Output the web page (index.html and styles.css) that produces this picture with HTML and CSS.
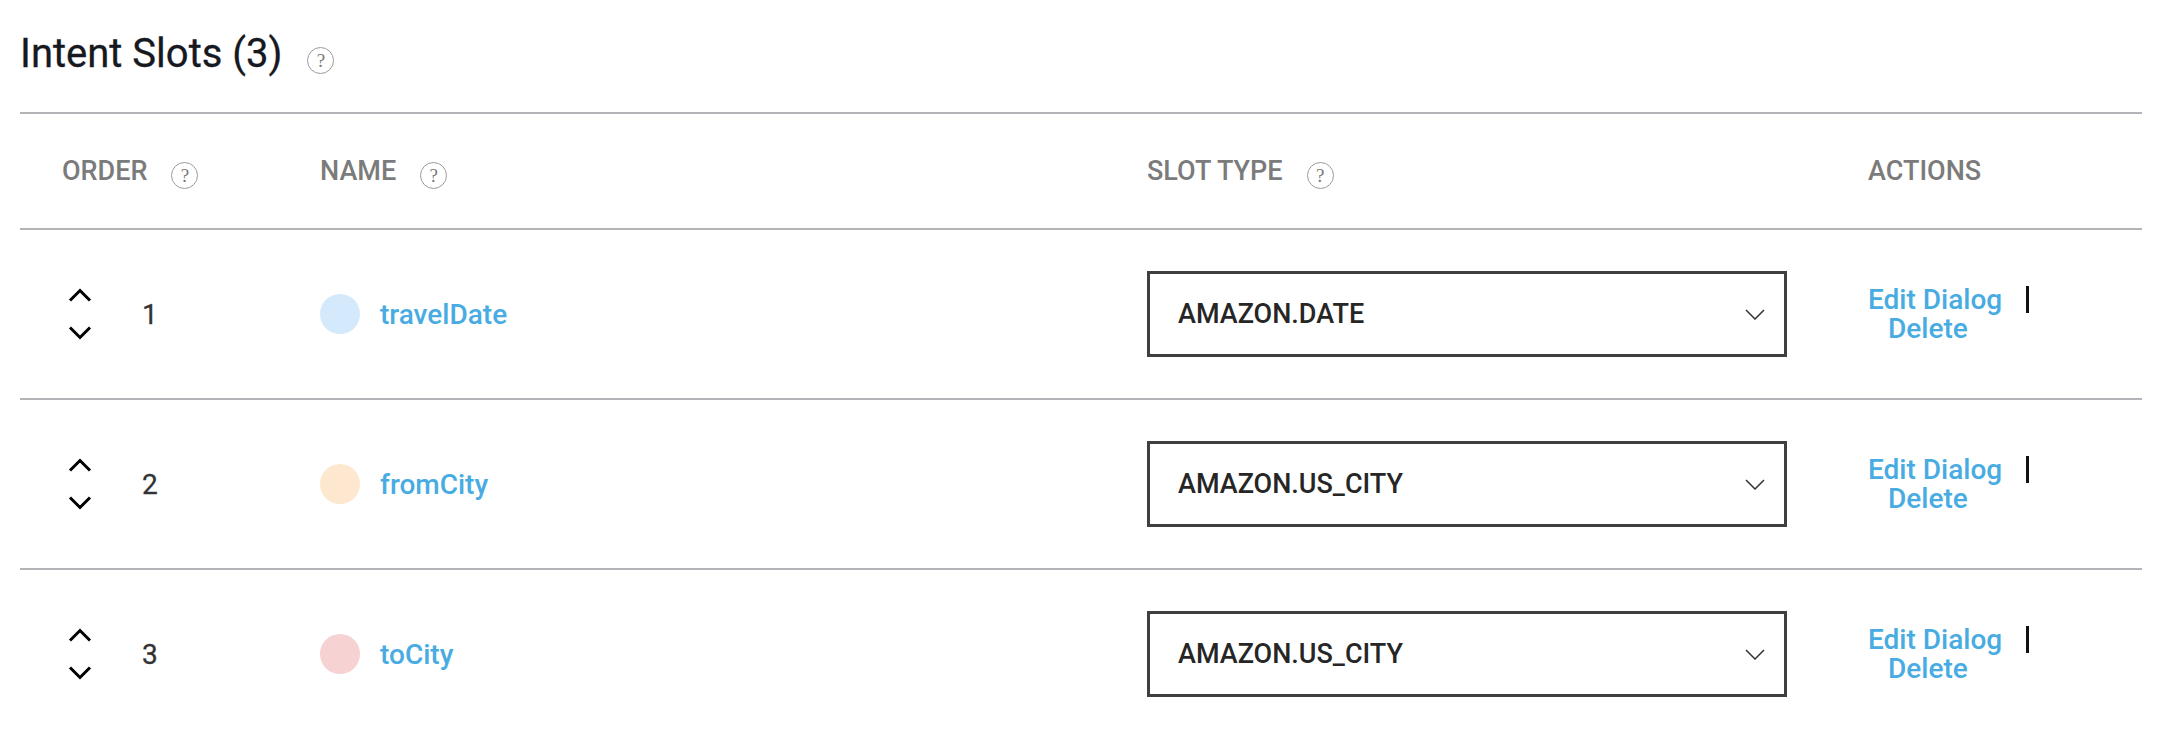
FILE: index.html
```html
<!DOCTYPE html>
<html>
<head>
<meta charset="utf-8">
<link rel="stylesheet" href="styles.css">
</head>
<body>
<div class="page">
  <div class="title-row">
    <h1 class="title">Intent Slots (3)</h1>
    <span class="help help-title">?</span>
  </div>
  <div class="table">
    <div class="row head">
      <div class="cell"><span class="th">ORDER</span><span class="help">?</span></div>
      <div class="cell"><span class="th">NAME</span><span class="help">?</span></div>
      <div class="cell"><span class="th">SLOT TYPE</span><span class="help">?</span></div>
      <div class="cell"><span class="th">ACTIONS</span></div>
    </div>

    <div class="row">
      <div class="cell order">
        <div class="arrows">
          <svg class="arrow" width="24" height="14" viewBox="0 0 24 14"><path d="M2 12.5 L12 2.5 L22 12.5" fill="none" stroke="#000" stroke-width="3"/></svg>
          <svg class="arrow" width="24" height="14" viewBox="0 0 24 14"><path d="M2 1.5 L12 11.5 L22 1.5" fill="none" stroke="#000" stroke-width="3"/></svg>
        </div>
        <span class="num">1</span>
      </div>
      <div class="cell name"><span class="dot dot-blue"></span><a class="link">travelDate</a></div>
      <div class="cell"><div class="select"><span>AMAZON.DATE</span><svg width="20" height="11" viewBox="0 0 20 11"><path d="M1 1 L10 10 L19 1" fill="none" stroke="#333" stroke-width="1.5"/></svg></div></div>
      <div class="cell actions">
        <div class="act-line"><a class="link act">Edit Dialog</a><span class="sep"></span></div>
        <div class="act-line del"><a class="link act">Delete</a></div>
      </div>
    </div>

    <div class="row">
      <div class="cell order">
        <div class="arrows">
          <svg class="arrow" width="24" height="14" viewBox="0 0 24 14"><path d="M2 12.5 L12 2.5 L22 12.5" fill="none" stroke="#000" stroke-width="3"/></svg>
          <svg class="arrow" width="24" height="14" viewBox="0 0 24 14"><path d="M2 1.5 L12 11.5 L22 1.5" fill="none" stroke="#000" stroke-width="3"/></svg>
        </div>
        <span class="num">2</span>
      </div>
      <div class="cell name"><span class="dot dot-orange"></span><a class="link">fromCity</a></div>
      <div class="cell"><div class="select"><span>AMAZON.US_CITY</span><svg width="20" height="11" viewBox="0 0 20 11"><path d="M1 1 L10 10 L19 1" fill="none" stroke="#333" stroke-width="1.5"/></svg></div></div>
      <div class="cell actions">
        <div class="act-line"><a class="link act">Edit Dialog</a><span class="sep"></span></div>
        <div class="act-line del"><a class="link act">Delete</a></div>
      </div>
    </div>

    <div class="row">
      <div class="cell order">
        <div class="arrows">
          <svg class="arrow" width="24" height="14" viewBox="0 0 24 14"><path d="M2 12.5 L12 2.5 L22 12.5" fill="none" stroke="#000" stroke-width="3"/></svg>
          <svg class="arrow" width="24" height="14" viewBox="0 0 24 14"><path d="M2 1.5 L12 11.5 L22 1.5" fill="none" stroke="#000" stroke-width="3"/></svg>
        </div>
        <span class="num">3</span>
      </div>
      <div class="cell name"><span class="dot dot-pink"></span><a class="link">toCity</a></div>
      <div class="cell"><div class="select"><span>AMAZON.US_CITY</span><svg width="20" height="11" viewBox="0 0 20 11"><path d="M1 1 L10 10 L19 1" fill="none" stroke="#333" stroke-width="1.5"/></svg></div></div>
      <div class="cell actions">
        <div class="act-line"><a class="link act">Edit Dialog</a><span class="sep"></span></div>
        <div class="act-line del"><a class="link act">Delete</a></div>
      </div>
    </div>
  </div>
</div>
</body>
</html>
```

FILE: styles.css
```css
html, body {
  margin: 0;
  padding: 0;
  background: #ffffff;
}

body {
  font-family: Roboto, "Open Sans", sans-serif;
  color: #2b2b2b;
  overflow: hidden;
}

.page {
  padding-left: 20px;
  width: 2122px;
}

.title-row {
  display: flex;
  align-items: center;
  padding-top: 31px;
  height: 46px;
  margin-bottom: 35px;
}

.title {
  margin: 0;
  font-size: 40px;
  line-height: 46px;
  font-weight: 400;
  color: #16191f;
  -webkit-text-stroke: 0.3px #16191f;
}

.help {
  display: inline-flex;
  align-items: center;
  justify-content: center;
  box-sizing: border-box;
  width: 27px;
  height: 27px;
  border: 1.5px solid #9b9b9b;
  border-radius: 50%;
  font-family: "Liberation Serif", serif;
  font-size: 19px;
  line-height: 1;
  color: #7a7a7a;
  margin-left: 24px;
  margin-top: 8px;
}

.help-title {
  margin-left: 25px;
  margin-top: 12px;
}

.table {
  display: flex;
  flex-direction: column;
}

.row {
  display: grid;
  grid-template-columns: 258px 827px 721px 1fr;
  padding-left: 42px;
  border-top: 2px solid #b4b4b8;
  height: 168px;
  align-items: center;
}

.row.head {
  height: 114px;
}

.cell {
  display: flex;
  align-items: center;
}

.th {
  font-size: 27px;
  font-weight: 500;
  color: #7b7b7b;
  line-height: 1;
}

.arrows {
  display: flex;
  flex-direction: column;
  gap: 24px;
  margin-left: 6px;
  width: 24px;
}

.arrow {
  display: block;
}

.num {
  margin-left: 50px;
  font-size: 28px;
  font-weight: 400;
  color: #333;
  -webkit-text-stroke: 0.3px #333;
}

.dot {
  display: block;
  width: 40px;
  height: 40px;
  border-radius: 50%;
  margin-right: 20px;
}

.dot-blue { background: #d4e9fb; }
.dot-orange { background: #fde7cf; }
.dot-pink { background: #f6d2d2; }

.link {
  font-size: 28px;
  font-weight: 500;
  color: #48ace2;
  text-decoration: none;
}

.select {
  box-sizing: border-box;
  width: 640px;
  height: 86px;
  border: 3px solid #3d3f41;
  display: flex;
  align-items: center;
  justify-content: space-between;
  padding-left: 28px;
  padding-right: 19px;
  font-size: 27px;
  font-weight: 500;
  color: #262626;
}

.select svg {
  display: block;
}

.actions {
  flex-direction: column;
  align-items: flex-start;
}

.act-line {
  display: flex;
  align-items: center;
  height: 29px;
}

.act {
  display: block;
  height: 29px;
  line-height: 29px;
}

.sep {
  display: block;
  width: 3px;
  height: 27px;
  background: #111;
  margin-left: 24px;
}

.del {
  padding-left: 20px;
}
```
